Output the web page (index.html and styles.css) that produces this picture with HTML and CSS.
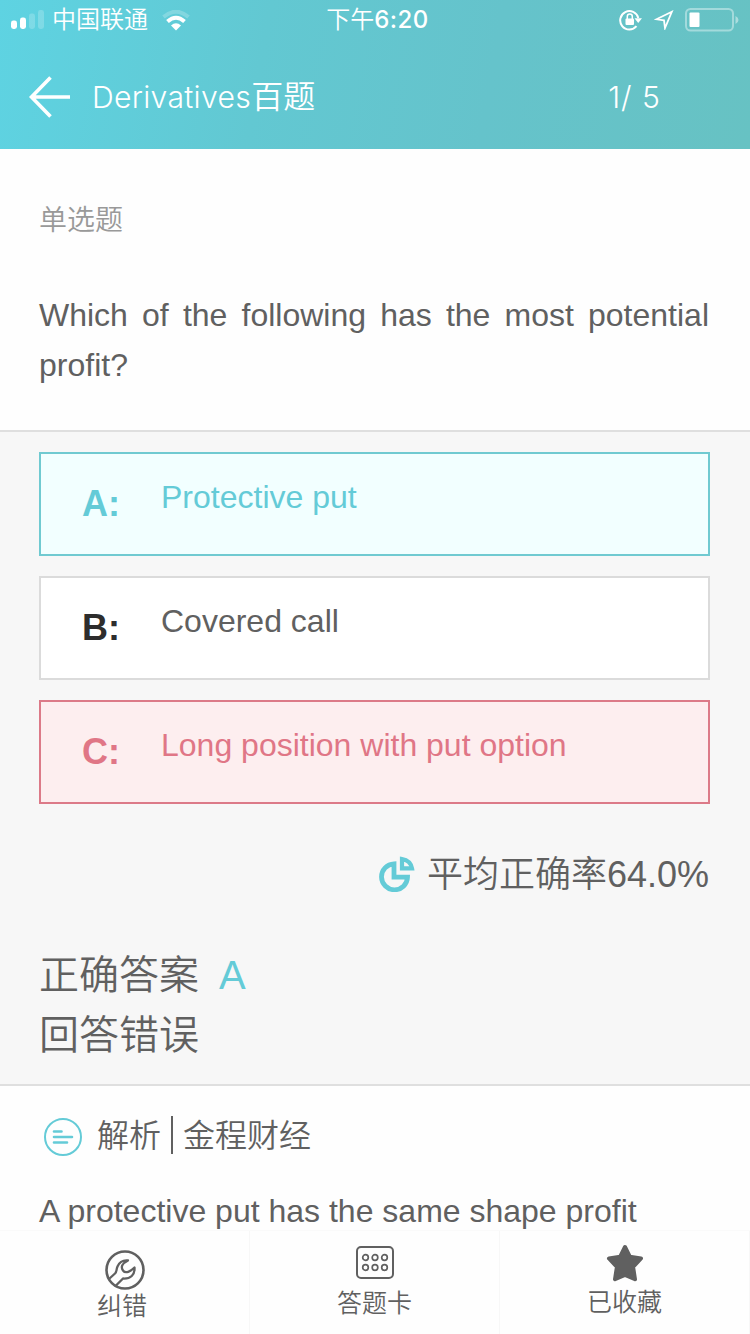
FILE: index.html
```
<!DOCTYPE html>
<html lang="zh-CN">
<head>
  <meta charset="UTF-8">
  <title>Derivatives百题</title>
  <link rel="stylesheet" href="styles.css">
</head>
<body>
  <header class="header">
    <div class="status-bar">
      <div class="status-left">
        <svg class="signal" width="34" height="20" viewBox="0 0 34 20" fill="#fff">
          <rect x="0" y="10.5" width="6" height="8.5" rx="2.4"/>
          <rect x="9" y="7.5" width="6" height="11.5" rx="2.4"/>
          <rect x="18" y="3.5" width="6" height="15.5" rx="2.4" opacity=".2"/>
          <rect x="27" y="0" width="6" height="19" rx="2.4" opacity=".2"/>
        </svg>
        <span class="carrier">中国联通</span>
        <svg class="wifi" width="28" height="21" viewBox="0 0 28 21" fill="none" stroke="#fff">
          <path d="M1.5 7Q14-3.5 26.5 7" stroke-width="4" opacity=".22"/>
          <path d="M5.5 11.5Q14 4 22.5 11.5" stroke-width="4"/>
          <path d="M9 15.5Q14 11 19 15.5L14 20.5Z" fill="#fff" stroke="none"/>
        </svg>
      </div>
      <span class="time">下午<b>6:20</b></span>
      <div class="status-right">
        <svg width="23" height="22" viewBox="0 0 23 22" fill="none" stroke="#fff" stroke-width="2">
          <path d="M17.5 17.2A9.2 9.2 0 1 1 19.3 9"/>
          <path d="M15.5 9.3h7.5l-3.8 4.7z" fill="#fff" stroke="none"/>
          <rect x="6.5" y="9.5" width="8.5" height="6.5" rx="1" fill="#fff" stroke="none"/>
          <path d="M8.3 10V7.6a2.5 2.5 0 0 1 5 0V10" stroke-width="1.5"/>
        </svg>
        <svg width="20" height="20" viewBox="0 0 20 20" fill="none" stroke="#fff" stroke-width="1.8">
          <path d="M17.8 1.8L2.5 9.3l7.5 1 1 7.7z"/>
        </svg>
        <svg width="54" height="24" viewBox="0 0 54 24">
          <rect x="1" y="1" width="47" height="21.5" rx="4.5" fill="none" stroke="#fff" stroke-width="2" opacity=".4"/>
          <rect x="4.5" y="4.5" width="10" height="14.5" rx="1" fill="#fff"/>
          <path d="M50.5 8v8q3-1.5 3-4t-3-4z" fill="#fff" opacity=".45"/>
        </svg>
      </div>
    </div>
    <div class="title-bar">
      <svg class="back" width="42" height="42" viewBox="0 0 42 42" fill="none" stroke="#fff" stroke-width="3.6">
        <path d="M21.5 1.5L2.5 21l19 19.500M2.5 21H41"/>
      </svg>
      <h1 class="title"><span class="title-latin">Derivatives</span>百题</h1>
      <span class="progress">1/ 5</span>
    </div>
  </header>

  <main class="content">
    <section class="question">
      <p class="type">单选题</p>
      <p class="stem">Which of the following has the most potential profit?</p>
    </section>

    <section class="answers">
      <ul class="options">
        <li class="option correct"><b>A:</b><span>Protective put</span></li>
        <li class="option"><b>B:</b><span>Covered call</span></li>
        <li class="option wrong"><b>C:</b><span>Long position with put option</span></li>
      </ul>
      <div class="average">
        <svg width="37" height="37" viewBox="0 0 37 37" fill="none" stroke="#64cbd7" stroke-width="4.8">
          <path d="M16 8.8A13 13 0 1 0 29.5 22.2H16z"/>
          <path d="M24 4v9.300h10Q32.500 5.500 24 4z" stroke-width="4.2"/>
        </svg>
        <span>平均正确率64.0%</span>
      </div>
      <div class="result">
        <p>正确答案<span class="key">A</span></p>
        <p>回答错误</p>
      </div>
    </section>

    <section class="analysis">
      <h2 class="analysis-title">
        <svg width="38" height="38" viewBox="0 0 38 38" fill="none" stroke="#64cbd7" stroke-linecap="round">
          <circle cx="19" cy="19" r="18" stroke-width="2"/>
          <path d="M10 13.5h7.5M10 19h18M10 24.5h13" stroke-width="2.6"/>
        </svg>
        <span>解析</span>
        <i class="divider"></i>
        <span>金程财经</span>
      </h2>
      <p class="analysis-text">A protective put has the same shape profit</p>
    </section>
  </main>

  <nav class="tabs">
    <a class="tab tab-fix">
      <svg width="40" height="40" viewBox="0 0 40 40" fill="none" stroke="#606060" stroke-width="2.3">
        <circle cx="20" cy="20" r="18.5" stroke-width="2.6"/>
        <path d="M4.5 28.5L10 23.5C12 21.5 11 20 12.5 16.5C14.5 12 18 10 23 10.5C17 13.5 15.5 17 18 20.5C20.5 24 25.5 21.5 29.5 17.5C30 25 25.5 29 18 28.5L11 35.5" stroke-linejoin="round"/>
      </svg>
      <span>纠错</span>
    </a>
    <a class="tab tab-card">
      <svg width="38" height="33" viewBox="0 0 38 33" fill="none" stroke="#606060" stroke-width="2">
        <rect x="1" y="1" width="36" height="31" rx="4"/>
        <g stroke-width="1.7">
          <circle cx="9.5" cy="11.5" r="2.8"/>
          <circle cx="19" cy="11.5" r="2.8"/>
          <circle cx="28.5" cy="11.5" r="2.8"/>
          <circle cx="9.5" cy="21.5" r="2.8"/>
          <circle cx="19" cy="21.5" r="2.8"/>
          <circle cx="28.5" cy="21.5" r="2.8"/>
        </g>
      </svg>
      <span>答题卡</span>
    </a>
    <a class="tab tab-star">
      <svg width="38" height="38" viewBox="0 0 38 38" fill="#606060" stroke="#606060" stroke-width="4" stroke-linejoin="round">
        <path d="M19 3l4.800 9.700 11.200 1.800-7.900 8.500 1.900 12.200-10-4.400-10 4.400 1.900-12.200L3 14.500l11.200-1.800z"/>
      </svg>
      <span>已收藏</span>
    </a>
  </nav>
</body>
</html>
```
FILE: styles.css
```
* {
  box-sizing: border-box;
  margin: 0;
  padding: 0;
}
body {
  display: flex;
  flex-direction: column;
  width: 750px;
  height: 1334px;
  overflow: hidden;
  background: #fefefe;
  color: #606060;
  font-family: "Liberation Sans", "Noto Sans CJK SC", sans-serif;
  font-size: 32px;
  font-weight: 350;
}
svg {
  display: block;
  flex: none;
}

/* header */
.header {
  height: 149px;
  flex: none;
  color: #fff;
  background: linear-gradient(100deg, #5ed3e2 0%, #62c8d2 35%, #65c3cb 65%, #67c2c3 100%);
}
.status-bar {
  display: grid;
  grid-template-columns: 1fr auto 1fr;
  align-items: center;
  height: 40px;
  padding: 0 11px;
}
.status-left,
.status-right {
  display: flex;
  align-items: center;
}
.carrier {
  margin-left: 7px;
  font-size: 24px;
  line-height: 40px;
}
.wifi {
  margin-left: 14px;
}
.time {
  padding-left: 5px;
  font-family: Inter, "Noto Sans CJK SC", sans-serif;
  font-size: 24px;
  line-height: 40px;
}
.time b {
  font-weight: 500;
  letter-spacing: 0.5px;
}
.status-right {
  justify-content: flex-end;
  gap: 11.5px;
}
.title-bar {
  display: flex;
  align-items: center;
  height: 109px;
  padding: 5px 89px 0 29px;
}
.title {
  flex: 1;
  margin-left: 21px;
  padding-bottom: 6px;
  font-size: 32px;
  font-weight: 350;
}
.title-latin,
.progress {
  font-family: Inter, sans-serif;
  font-size: 30.2px;
  font-weight: 350;
  letter-spacing: 0.3px;
}
.progress {
  letter-spacing: 1px;
}

/* question */
.content {
  flex: 1;
  min-height: 0;
  overflow: hidden;
}
.question {
  height: 282.5px;
  padding: 52px 41px 0 39px;
  border-bottom: 2px solid #dfdfdf;
}
.type {
  color: #999;
  font-size: 28px;
  line-height: 40px;
}
.stem {
  margin-top: 49px;
  line-height: 50px;
  text-align: justify;
}

/* options */
.answers {
  height: 654px;
  padding: 20px 40px 0 39px;
  background: #f7f7f7;
  border-bottom: 2px solid #dfdfdf;
}
.options {
  display: grid;
  gap: 20px;
  list-style: none;
}
.option {
  display: flex;
  height: 104px;
  padding-left: 41px;
  background: #fff;
  border: 2px solid #dbdbdb;
}
.option b {
  width: 79px;
  color: #2d2d2d;
  font-size: 36px;
  font-weight: 700;
  line-height: 100px;
}
.option span {
  line-height: 87px;
}
.correct {
  background: #f2ffff;
  border-color: #70cad1;
}
.correct,
.correct b {
  color: #64cbd7;
}
.wrong {
  background: #fdeeef;
  border-color: #dc7a88;
}
.wrong,
.wrong b {
  color: #e07686;
}

/* result */
.average {
  display: flex;
  justify-content: flex-end;
  align-items: center;
  gap: 12px;
  height: 54px;
  margin-top: 43px;
  padding-right: 1px;
  font-size: 36px;
}
.average span {
  padding-bottom: 5px;
}
.result {
  margin-top: 44px;
  font-size: 40px;
  line-height: 60px;
}
.key {
  margin-left: 20px;
  color: #64cbd7;
}

/* analysis */
.analysis {
  padding: 25px 39px 0;
}
.analysis-title {
  display: flex;
  align-items: center;
  height: 52px;
  padding-left: 5px;
  font-size: 32px;
  font-weight: 350;
}
.analysis-title svg {
  margin-right: 15px;
}
.analysis-title span {
  padding-bottom: 7px;
}
.divider {
  width: 2px;
  height: 38px;
  margin: 0 10px 3px;
  background: #606060;
}
.analysis-text {
  margin-top: 23px;
  line-height: 50px;
  white-space: nowrap;
}

/* bottom tabs */
.tabs {
  display: grid;
  grid-template-columns: repeat(3, 1fr);
  height: 104px;
  flex: none;
  background: #fefefe;
  border-top: 1px solid #fafafa;
}
.tab {
  display: flex;
  flex-direction: column;
  align-items: center;
  border-right: 1px solid #f7f7f7;
  font-size: 25px;
  line-height: 32px;
}
.tab-fix {
  padding-top: 19px;
}
.tab-fix span {
  padding-right: 5px;
}
.tab-card {
  padding-top: 15px;
}
.tab-card span {
  margin-top: 8px;
}
.tab-star {
  padding-top: 13px;
}
.tab-star span {
  margin-top: 4px;
}
```
